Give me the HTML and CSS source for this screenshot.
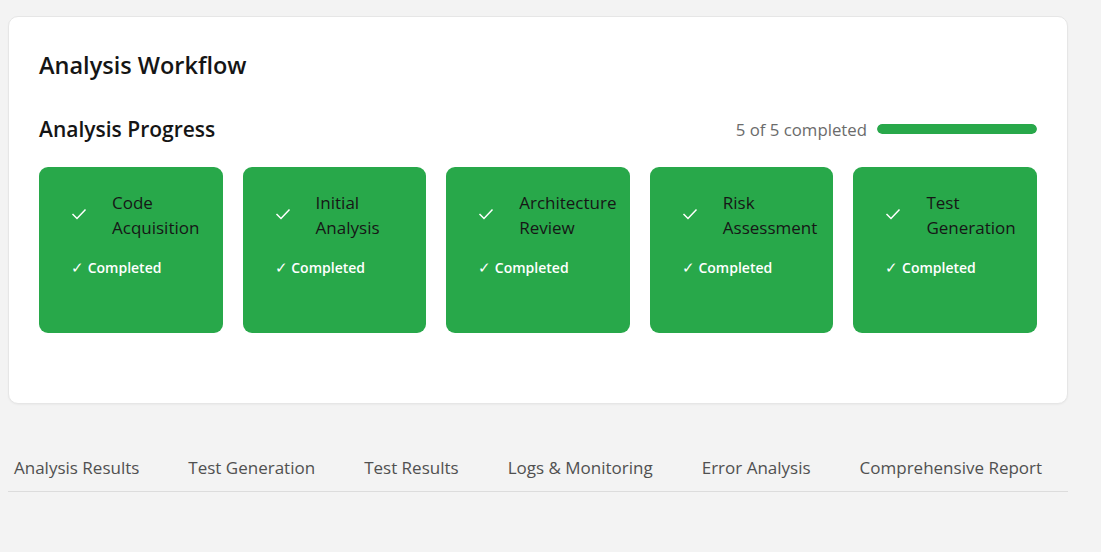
FILE: index.html
```html
<!DOCTYPE html>
<html lang="en">
<head>
<meta charset="utf-8">
<title>Analysis Workflow</title>
<link rel="stylesheet" href="styles.css">
</head>
<body>
<main class="page">
  <section class="panel">
    <h1 class="panel-title">Analysis Workflow</h1>
    <div class="progress-head">
      <h2 class="progress-title">Analysis Progress</h2>
      <div class="progress-meta">
        <span class="progress-text">5 of 5 completed</span>
        <div class="progress-bar"><div class="progress-fill" style="width:100%"></div></div>
      </div>
    </div>
    <div class="steps">
      <div class="step">
        <div class="step-top">
          <span class="step-icon"><svg width="16" height="12" viewBox="0 0 16 12"><polyline points="1.5,6 6,10.5 14.5,1.5" fill="none" stroke="#fff" stroke-width="1.5"/></svg></span>
          <span class="step-name">Code Acquisition</span>
        </div>
        <div class="step-status"><span class="tick">✓</span> Completed</div>
      </div>
      <div class="step">
        <div class="step-top">
          <span class="step-icon"><svg width="16" height="12" viewBox="0 0 16 12"><polyline points="1.5,6 6,10.5 14.5,1.5" fill="none" stroke="#fff" stroke-width="1.5"/></svg></span>
          <span class="step-name">Initial Analysis</span>
        </div>
        <div class="step-status"><span class="tick">✓</span> Completed</div>
      </div>
      <div class="step">
        <div class="step-top">
          <span class="step-icon"><svg width="16" height="12" viewBox="0 0 16 12"><polyline points="1.5,6 6,10.5 14.5,1.5" fill="none" stroke="#fff" stroke-width="1.5"/></svg></span>
          <span class="step-name">Architecture Review</span>
        </div>
        <div class="step-status"><span class="tick">✓</span> Completed</div>
      </div>
      <div class="step">
        <div class="step-top">
          <span class="step-icon"><svg width="16" height="12" viewBox="0 0 16 12"><polyline points="1.5,6 6,10.5 14.5,1.5" fill="none" stroke="#fff" stroke-width="1.5"/></svg></span>
          <span class="step-name">Risk Assessment</span>
        </div>
        <div class="step-status"><span class="tick">✓</span> Completed</div>
      </div>
      <div class="step">
        <div class="step-top">
          <span class="step-icon"><svg width="16" height="12" viewBox="0 0 16 12"><polyline points="1.5,6 6,10.5 14.5,1.5" fill="none" stroke="#fff" stroke-width="1.5"/></svg></span>
          <span class="step-name">Test Generation</span>
        </div>
        <div class="step-status"><span class="tick">✓</span> Completed</div>
      </div>
    </div>
  </section>
  <nav class="tabs">
    <span class="tab">Analysis Results</span>
    <span class="tab">Test Generation</span>
    <span class="tab">Test Results</span>
    <span class="tab">Logs &amp; Monitoring</span>
    <span class="tab">Error Analysis</span>
    <span class="tab">Comprehensive Report</span>
  </nav>
</main>
</body>
</html>
```
FILE: styles.css
```css
* { box-sizing: border-box; }
html, body {
  margin: 0;
  padding: 0;
  background: #f3f3f3;
  font-family: "Open Sans", "Noto Sans", sans-serif;
  color: #1b1b1b;
}
.page {
  width: 1060px;
  margin: 0 0 0 8px;
  padding-top: 16px;
}
.panel {
  background: #fff;
  border: 1px solid #e6e6e6;
  border-radius: 10px;
  padding: 30px 30px 70px 30px;
  box-shadow: 0 1px 2px rgba(0,0,0,0.04);
}
.panel-title {
  margin: 0;
  font-size: 23.5px;
  font-weight: 600;
  line-height: 36px;
  color: #151515;
}
.progress-head {
  display: flex;
  align-items: center;
  justify-content: space-between;
  margin-top: 32px;
  height: 28px;
}
.progress-title {
  margin: 0;
  font-size: 21px;
  font-weight: 600;
  color: #151515;
}
.progress-meta {
  display: flex;
  align-items: center;
  gap: 10px;
}
.progress-text {
  font-size: 16.8px;
  color: #6b6b6b;
}
.progress-bar {
  width: 160px;
  height: 10px;
  border-radius: 5px;
  background: #e9ecef;
  overflow: hidden;
}
.progress-fill {
  height: 100%;
  background: #28a84a;
  border-radius: 5px;
}
.steps {
  display: grid;
  grid-template-columns: repeat(5, 1fr);
  gap: 20px;
  margin-top: 24px;
}
.step {
  background: #28a84a;
  border-radius: 9px;
  height: 166px;
  padding: 23px 12px 0 32px;
}
.step-top {
  display: flex;
  align-items: center;
}
.step-icon {
  width: 41px;
  flex: none;
  display: flex;
  align-items: center;
  margin-top: -3px;
}
.step-name {
  font-size: 17px;
  line-height: 25px;
  color: #161616;
}
.step-status {
  margin-top: 18px;
  font-size: 14px;
  font-weight: 600;
  color: #fff;
}
.tick {
  font-family: "DejaVu Sans", sans-serif;
  font-weight: 200;
  font-size: 15px;
}
.tabs {
  display: flex;
  gap: 37px;
  margin-top: 52px;
  border-bottom: 1px solid #dcdcdc;
  padding: 0 0 12px 0;
}
.tab {
  padding: 0 6px;
  font-size: 17px;
  line-height: 23px;
  color: #505050;
}
```
